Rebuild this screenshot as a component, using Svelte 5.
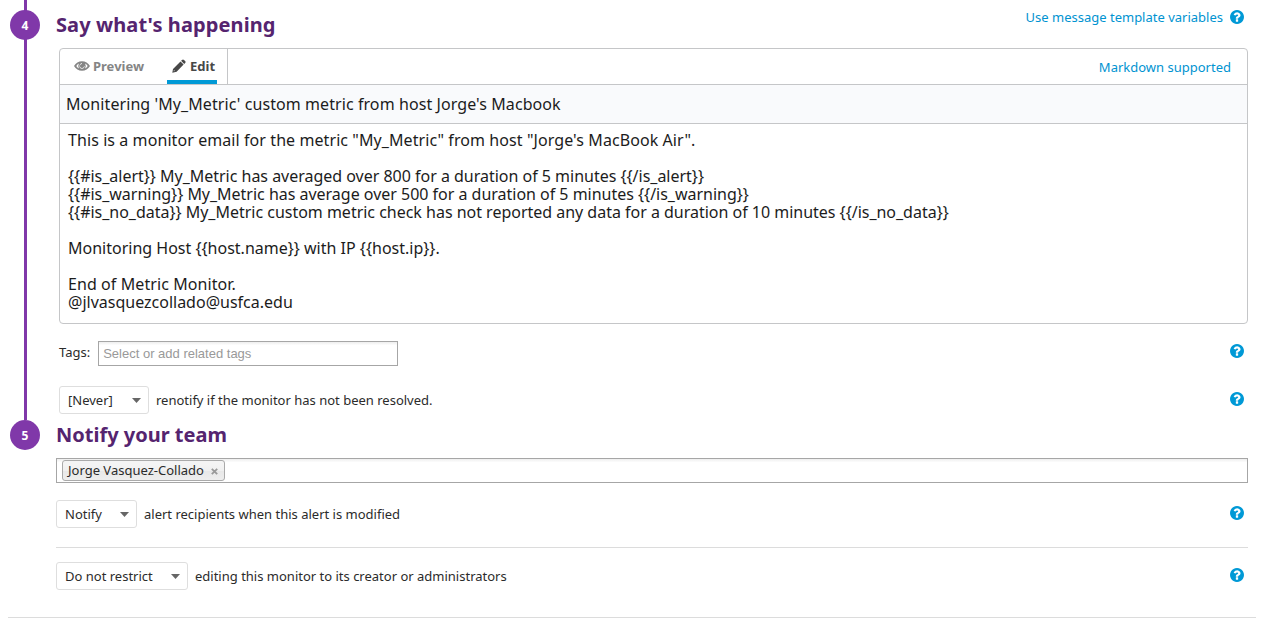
<script>
  const message = [
    { text: `This is a monitor email for the metric "My_Metric" from host "Jorge's MacBook Air".`, tracking: 0.08 },
    { text: '', tracking: 0 },
    { text: '{{#is_alert}} My_Metric has averaged over 800 for a duration of 5 minutes {{/is_alert}}', tracking: -0.015 },
    { text: '{{#is_warning}} My_Metric has average over 500 for a duration of 5 minutes {{/is_warning}}', tracking: -0.015 },
    { text: '{{#is_no_data}} My_Metric custom metric check has not reported any data for a duration of 10 minutes {{/is_no_data}}', tracking: -0.015 },
    { text: '', tracking: 0 },
    { text: 'Monitoring Host {{host.name}} with IP {{host.ip}}.', tracking: 0 },
    { text: '', tracking: 0 },
    { text: 'End of Metric Monitor.', tracking: 0.08 },
    { text: '@jlvasquezcollado@usfca.edu', tracking: 0 },
  ];
</script>

{#snippet help()}
  <svg class="help" viewBox="128 128 1536 1536" aria-hidden="true"><path d="M1024 1376v-192q0-14-9-23t-23-9h-192q-14 0-23 9t-9 23v192q0 14 9 23t23 9h192q14 0 23-9t9-23zM1280 704q0-88-55.5-163t-138.5-116-170-41q-243 0-371 213-15 24 8 42l132 100q7 6 19 6 16 0 25-12 53-68 86-92 34-24 86-24 48 0 85.5 26t37.5 59q0 38-20 61t-68 45q-63 28-115.500 86.500t-52.500 125.500v36q0 14 9 23t23 9h192q14 0 23-9t9-23q0-19 21.500-49.500t54.500-49.500q32-18 49-28.500t46-35 44.500-48 28-60.500 12.500-81zM1664 896q0 209-103 385.500t-279.500 279.500-385.500 103-385.500-103-279.500-279.500-103-385.500 103-385.500 279.500-279.500 385.500-103 385.500 103 279.500 279.500 103 385.500z" /></svg>
{/snippet}

{#snippet choice(label, width, text)}
  <div class="choice">
    <div class="select" style:width="{width}px">
      <span>{label}</span>
      <svg width="9" height="5" viewBox="0 0 9 5" aria-hidden="true"><path d="M0 0h9L4.500 5z" /></svg>
    </div>
    <span class="text">{text}</span>
    {@render help()}
  </div>
{/snippet}

<main>
  <section class="step four">
    <div class="rail"><div class="num">4</div></div>
    <div class="body">
      <header>
        <h2>Say what's happening</h2>
        <div class="vars"><a>Use message template variables</a>{@render help()}</div>
      </header>
      <div class="inset">
        <div class="editor">
          <div class="tabbar">
            <div class="tabs">
              <div class="tab">
                <svg class="eye" width="16" height="10" viewBox="0 0 16 10" aria-hidden="true">
                  <path fill-rule="evenodd" d="M0 5C1.800 2 4.600.3 8 .3S14.200 2 16 5C14.200 8 11.400 9.700 8 9.700S1.800 8 0 5zM2.300 5C3 6.200 3.800 7 4.900 7.600Q3.500 5 4.900 2.400C3.800 3 3 3.800 2.300 5zM13.700 5C13 3.800 12.200 3 11.100 2.400Q12.500 5 11.100 7.600C12.200 7 13 6.200 13.700 5zM8 2.100A2.900 2.900 0 0 0 5.500 5A2.500 2.700 0 0 0 10.500 5H9.300A1.300 1.500 0 0 1 6.700 5A1.300 1.500 0 0 1 8 3.500z" />
                  <path d="M8 2.900A2.100 2.100 0 1 0 10.100 5L8 5z" />
                </svg>
                <span>Preview</span>
              </div>
              <div class="tab active">
                <svg class="pencil" width="14" height="14" viewBox="0 0 14 14" aria-hidden="true">
                  <path d="M10 .9Q11-.1 12 .9L13.100 2Q14.100 3 13.100 4L12.200 4.900L9.100 1.800z" />
                  <path fill-rule="evenodd" d="M8.500 2.400L11.600 5.500L4.600 12.700L.3 13.700L1 9.900zM1.900 11.100L1.700 12.300L2.900 12.100z" />
                </svg>
                <span>Edit</span>
              </div>
            </div>
            <a>Markdown supported</a>
          </div>
          <div class="subject">Monitering 'My_Metric' custom metric from host Jorge's Macbook</div>
          <div class="message">
            {#each message as line}
              <div style:letter-spacing="{line.tracking}px">{line.text}</div>
            {/each}
          </div>
        </div>
        <div class="tags">
          <span>Tags:</span>
          <div class="field">Select or add related tags</div>
          {@render help()}
        </div>
        {@render choice('[Never]', 90, 'renotify if the monitor has not been resolved.')}
      </div>
    </div>
  </section>

  <section class="step five">
    <div class="rail"><div class="num">5</div></div>
    <div class="body">
      <h2>Notify your team</h2>
      <div class="field people">
        <div class="chip"><span>Jorge Vasquez-Collado</span><svg width="7" height="7" viewBox="0 0 7 7" aria-hidden="true"><path d="M.8.8l5.400 5.400M6.200.8l-5.400 5.400" /></svg></div>
      </div>
      {@render choice('Notify', 81, 'alert recipients when this alert is modified')}
      <hr />
      {@render choice('Do not restrict', 132, 'editing this monitor to its creator or administrators')}
    </div>
  </section>
  <hr class="end" />
</main>

<style>
  :global(body) { background: #fff; }
  main {
    width: 1272px;
    height: 625px;
    overflow: hidden;
    font: 13px/18px "Noto Sans", sans-serif;
    color: #2b2b2b;
  }
  main * { box-sizing: border-box; }
  .step { display: flex; }
  .four { height: 420px; }
  .five { height: 197px; }
  .rail {
    flex: none;
    width: 30px;
    margin: 0 16px 0 10px;
    background: linear-gradient(#8038a9, #8038a9) 14px 0 / 3px 100% no-repeat;
  }
  .five .rail { background: none; }
  .num {
    width: 30px;
    height: 30px;
    border-radius: 50%;
    background: #8038a9;
    color: #fff;
    font-weight: 700;
    font-size: 12px;
    line-height: 31px;
    text-align: center;
  }
  .four .num { margin-top: 10px; }
  .body { width: 1192px; }
  header { display: flex; justify-content: space-between; height: 48px; }
  h2 {
    margin: 0;
    padding-top: 1px;
    font-size: 20px;
    line-height: 28px;
    font-weight: 700;
    color: #55246f;
  }
  header h2 { padding-top: 11px; letter-spacing: 0.1px; }
  a { color: #0093d1; }
  .vars { display: flex; align-items: center; gap: 7px; height: 16px; margin: 9px 4px 0 0; }
  .help { flex: none; width: 14px; height: 14px; fill: #0099d6; }
  .inset { margin-left: 3px; }
  .editor { height: 276px; border: 1px solid #c5c6c8; border-radius: 4px; }
  .tabbar { display: flex; justify-content: space-between; height: 36px; border-bottom: 1px solid #c5c6c8; }
  .tabbar > a { padding: 9px 16px 0 0; }
  .tabs { display: flex; gap: 22px; width: 168px; padding-left: 14px; border-right: 1px solid #c5c6c8; }
  .tab {
    display: flex;
    align-items: center;
    gap: 3px;
    flex: none;
    padding-bottom: 2px;
    font-weight: 700;
    color: #858585;
    fill: #858585;
  }
  .active {
    gap: 4px;
    width: 50px;
    margin-left: 1px;
    padding: 2px 0 0 5px;
    color: #484848;
    fill: #484848;
    border-bottom: 4px solid #0099d6;
  }
  .subject {
    height: 39px;
    padding-left: 6px;
    border-bottom: 1px solid #c5c6c8;
    background: #f9fafc;
    color: #1c1c1c;
    font-size: 16px;
    line-height: 38px;
    letter-spacing: 0.08px;
  }
  .message { padding: 7px 8px; font-size: 16px; line-height: 18px; color: #1c1c1c; }
  .message div { height: 18px; white-space: pre; }
  .tags { display: flex; align-items: center; gap: 8px; margin-top: 17px; padding-right: 4px; height: 25px; }
  .tags > span { margin-top: -3px; }
  .tags .help, .choice .help { margin-left: auto; }
  .tags .help { margin-top: -5px; }
  .field { border: 1px solid #a6a6a6; background: linear-gradient(#eee 0, #fff 15%); height: 25px; }
  .tags .field {
    width: 300px;
    padding-left: 4px;
    font: 13px/23px "Liberation Sans", sans-serif;
    color: #999;
  }
  .choice { display: flex; align-items: center; height: 28px; padding-right: 4px; }
  .choice .help { margin-top: -2px; }
  .inset .choice { margin-top: 20px; }
  .select {
    display: flex;
    align-items: center;
    justify-content: space-between;
    height: 28px;
    margin-right: 7px;
    padding: 0 7px 0 8px;
    border: 1px solid #dedede;
    border-radius: 3px;
  }
  .select svg { fill: #666; }
  .people { padding: 1px 5px; margin: 9px 0 17px; }
  .chip {
    display: flex;
    align-items: center;
    gap: 7px;
    width: 163px;
    height: 21px;
    padding: 0 0 2px 5px;
    border: 1px solid #aaa;
    border-radius: 3px;
    background: linear-gradient(#f4f4f4 20%, #f0f0f0 50%, #e8e8e8 52%, #eee);
  }
  .chip svg { margin-top: 3px; stroke: #999; stroke-width: 1.800; }
  hr { margin: 19px 0 14px; border: 0; border-top: 1px solid #dcdcdc; }
  hr.end { margin: 0 16px 0 8px; }
</style>
